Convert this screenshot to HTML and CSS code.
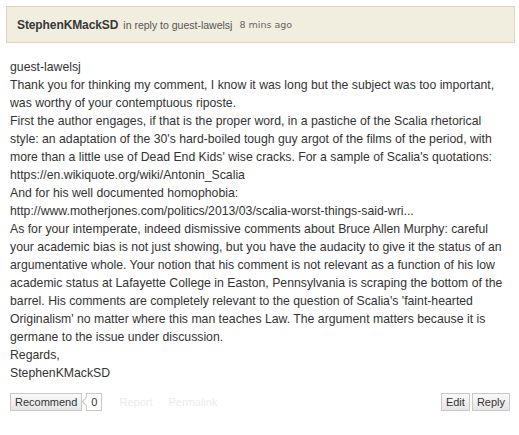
FILE: index.html
```html
<!DOCTYPE html>
<html>
<head>
<meta charset="utf-8">
<link rel="stylesheet" href="styles.css">
</head>
<body>
<div class="comment">
  <div class="comment-header">
    <span class="author">StephenKMackSD</span>
    <span class="reply-to">in reply to guest-lawelsj</span>
    <span class="time">8 mins ago</span>
  </div>
  <div class="comment-body">
    <p>guest-lawelsj</p>
    <p>Thank you for thinking my comment, I know it was long but the subject was too important,<br>was worthy of your contemptuous riposte.</p>
    <p>First the author engages, if that is the proper word, in a pastiche of the Scalia rhetorical<br>style: an adaptation of the 30's hard-boiled tough guy argot of the films of the period, with<br>more than a little use of Dead End Kids' wise cracks. For a sample of Scalia's quotations:</p>
    <p>https://en.wikiquote.org/wiki/Antonin_Scalia</p>
    <p>And for his well documented homophobia:</p>
    <p>http://www.motherjones.com/politics/2013/03/scalia-worst-things-said-wri...</p>
    <p>As for your intemperate, indeed dismissive comments about Bruce Allen Murphy: careful<br>your academic bias is not just showing, but you have the audacity to give it the status of an<br>argumentative whole. Your notion that his comment is not relevant as a function of his low<br>academic status at Lafayette College in Easton, Pennsylvania is scraping the bottom of the<br>barrel. His comments are completely relevant to the question of Scalia's 'faint-hearted<br>Originalism' no matter where this man teaches Law. The argument matters because it is<br>germane to the issue under discussion.</p>
    <p>Regards,</p>
    <p>StephenKMackSD</p>
  </div>
  <div class="comment-actions">
    <div class="actions-left">
      <button class="btn">Recommend</button>
      <span class="count">0</span>
      <a class="faint">Report</a>
      <a class="faint">Permalink</a>
    </div>
    <div class="actions-right">
      <button class="btn">Edit</button>
      <button class="btn">Reply</button>
    </div>
  </div>
</div>
</body>
</html>
```
FILE: styles.css
```css
html, body {
  margin: 0;
  padding: 0;
  background: #fff;
}
.comment {
  padding: 6px 4px 0 6px;
  font-family: "Liberation Sans", Arial, sans-serif;
  color: #333;
}
.comment-header {
  box-sizing: border-box;
  height: 37px;
  background: #f1eddf;
  border: 1px solid #dcd5b3;
  padding: 0 10px;
  display: flex;
  align-items: center;
  white-space: nowrap;
}
.author {
  font-weight: bold;
  font-size: 12px;
  letter-spacing: -0.1px;
  color: #383838;
}
.reply-to {
  font-size: 10.5px;
  color: #555;
  margin-left: 5px;
}
.time {
  font-family: "DejaVu Sans", Verdana, sans-serif;
  font-size: 9.5px;
  color: #666;
  margin-left: 7px;
}
.comment-body {
  padding: 0 0 0 4px;
  margin-top: 15px;
  font-size: 12.25px;
  line-height: 18px;
  color: #333;
  white-space: nowrap;
}
.comment-body p {
  margin: 0;
}
.comment-actions {
  margin-top: 11px;
  padding: 0 5px 0 4px;
  display: flex;
  justify-content: space-between;
  align-items: center;
}
.actions-left, .actions-right {
  display: flex;
  align-items: center;
}
.actions-right {
  gap: 2px;
}
.btn {
  box-sizing: border-box;
  height: 18px;
  padding: 0 4px;
  margin: 0;
  font-family: "Liberation Sans", Arial, sans-serif;
  font-size: 11px;
  line-height: 16px;
  color: #333;
  background: linear-gradient(#fafafa, #e6e6e6);
  border: 1px solid #c8c8c8;
  border-radius: 0;
}
.count {
  position: relative;
  box-sizing: border-box;
  height: 18px;
  margin-left: 4px;
  padding: 0 4px;
  font-size: 11px;
  line-height: 16px;
  color: #333;
  background: #fff;
  border: 1px solid #c8c8c8;
}
.count::before {
  content: "";
  position: absolute;
  left: -4px;
  top: 4px;
  width: 6px;
  height: 6px;
  background: #fff;
  border-left: 1px solid #c8c8c8;
  border-bottom: 1px solid #c8c8c8;
  transform: rotate(45deg);
}
.faint {
  font-size: 11px;
  color: #ececec;
  margin-left: 17px;
}
.faint + .faint {
  margin-left: 16px;
}
```
